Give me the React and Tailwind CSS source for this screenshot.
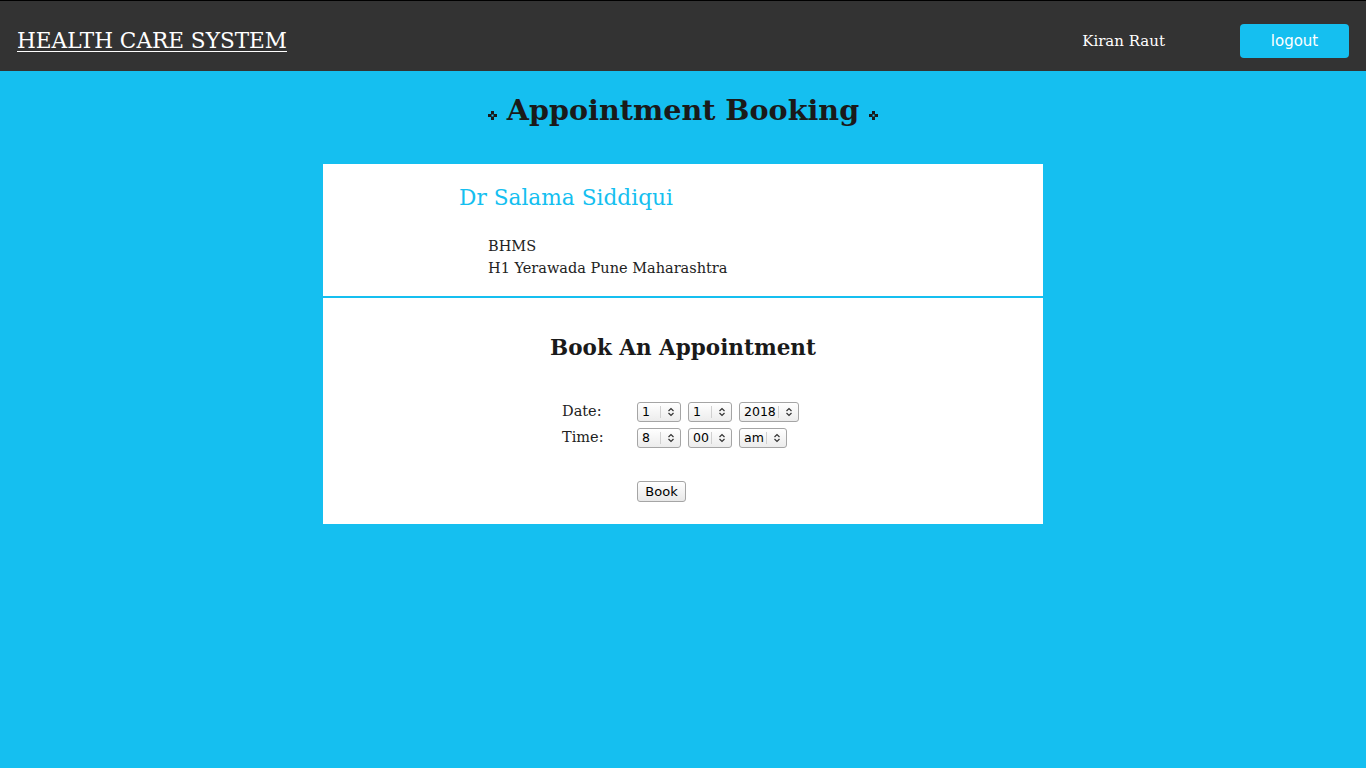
const serif = "font-['DejaVu_Serif','Liberation_Serif',serif]";
const sans = "font-['DejaVu_Sans','Liberation_Sans',sans-serif]";

const Ornament = () => (
  <svg width="9" height="9" viewBox="0 0 9 9" className="block">
    <path d="M3 0h3v3h3v3H6v3H3V6H0V3h3z" fill="#1a1a1a" />
    <rect x="3.5" y="3.5" width="2" height="2" fill="#15bff0" />
  </svg>
);

const Spinner = () => (
  <svg width="8" height="10" viewBox="0 0 8 10" fill="none" stroke="#333" strokeWidth="1.2">
    <path d="M1.5 4L4 1.5 6.5 4" />
    <path d="M1.5 6L4 8.5 6.5 6" />
  </svg>
);

const Select = ({ value, width }) => (
  <div
    className={`flex items-stretch h-5 rounded-[3px] border border-[#a5a5a5] bg-gradient-to-b from-white to-[#ececec] text-[12.5px] text-black ${sans} ${width}`}
  >
    <span className="flex-1 pl-1 leading-[18px]">{value}</span>
    <span className="flex items-center justify-center w-5 border-l border-[#d0d0d0] my-[3px]">
      <Spinner />
    </span>
  </div>
);

export default function App() {
  return (
    <div className={`min-h-screen bg-[#15bff0] ${serif}`}>
      <header className="h-[71px] bg-[#333333] border-t border-black flex items-center justify-between pt-[10px] px-[17px]">
        <a href="#" className="text-white text-[21.6px] underline underline-offset-[3px] decoration-1">
          HEALTH CARE SYSTEM
        </a>
        <div className="flex items-center gap-[75px]">
          <span className="text-white text-[15px]">Kiran Raut</span>
          <button className={`w-[109px] h-[34px] rounded-[4px] bg-[#15bff0] text-white text-[15px] ${sans}`}>
            logout
          </button>
        </div>
      </header>

      <h1 className="flex items-center justify-center gap-[10px] pt-[18px] text-[28.6px] font-bold text-[#1a1a1a]">
        <span className="pt-[10px]"><Ornament /></span>
        Appointment Booking
        <span className="pt-[10px]"><Ornament /></span>
      </h1>

      <div className="w-[720px] mx-auto mt-[32px] bg-white">
        <div className="h-[132px] pl-[136px] pt-[18px]">
          <h2 className="text-[21.7px] text-[#15bff0]">Dr Salama Siddiqui</h2>
          <div className="pl-[29px] mt-[21px] text-[14.5px] text-[#222] leading-[22px]">
            <p>BHMS</p>
            <p>H1 Yerawada Pune Maharashtra</p>
          </div>
        </div>
        <div className="h-[2px] bg-[#15bff0]" />
        <div className="h-[226px] pt-[34px]">
          <h3 className="text-center text-[21.5px] font-bold text-[#1a1a1a]">Book An Appointment</h3>
          <div className="pl-[239px] mt-[37px] text-[14.5px] text-[#222]">
            <div className="grid grid-cols-[75px_auto] gap-y-[4px] items-center">
              <span>Date:</span>
              <div className="flex gap-[7px]">
                <Select value="1" width="w-[44px]" />
                <Select value="1" width="w-[44px]" />
                <Select value="2018" width="w-[60px]" />
              </div>
              <span>Time:</span>
              <div className="flex gap-[7px]">
                <Select value="8" width="w-[44px]" />
                <Select value="00" width="w-[44px]" />
                <Select value="am" width="w-[48px]" />
              </div>
              <span />
              <div className="pt-[28px]">
                <button className={`w-[49px] h-[21px] rounded-[3px] border border-[#a5a5a5] bg-gradient-to-b from-white to-[#e8e8e8] text-[13px] text-black ${sans}`}>
                  Book
                </button>
              </div>
            </div>
          </div>
        </div>
      </div>
    </div>
  );
}
